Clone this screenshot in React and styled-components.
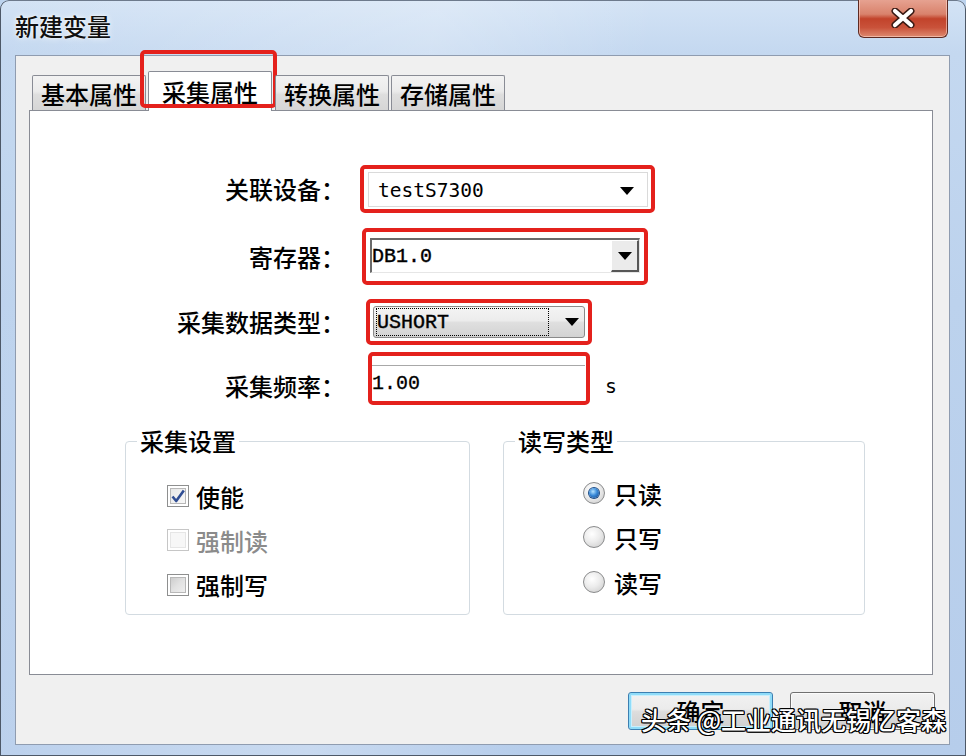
import React from 'react';
import styled, { createGlobalStyle } from 'styled-components';

const CJK = `"Noto Sans CJK SC", "Noto Sans", sans-serif`;
const MONO = `"Liberation Mono", "DejaVu Sans Mono", monospace`;

const GlobalStyle = createGlobalStyle`
  html, body { margin: 0; padding: 0; background: #bcd3ee; }
  body { font-family: ${CJK}; font-weight: 500; color: #000; }
  #root { width: 966px; height: 756px; overflow: hidden; }
`;

const Window = styled.div`
  position: relative;
  width: 966px;
  height: 756px;
  box-sizing: border-box;
  display: flex;
  flex-direction: column;
  overflow: hidden;
  border-radius: 9px 9px 0 0;
  background:
    linear-gradient(100deg, rgba(255,255,255,0.0) 0%, rgba(255,255,255,0.25) 40%, rgba(255,255,255,0.0) 60%),
    linear-gradient(180deg, #d3e3f5 0%, #c4d8f0 7%, #bcd2ed 40%, #b6cdeb 100%);
  box-shadow: inset 1px 0 0 #4d5867, inset 0 1px 0 #6d7a8c, inset -1px 0 0 #4d5867, inset 0 -1px 0 #4d5867;
`;

const TitleBar = styled.div`
  height: 55px;
  flex: none;
  display: flex;
  align-items: flex-start;
`;

const Title = styled.div`
  margin: 10px 0 0 15px;
  font-size: 24px;
  line-height: 32px;
  color: #101010;
  text-shadow: 0 0 6px rgba(255,255,255,0.9), 0 0 2px rgba(255,255,255,0.9);
`;

const CloseButton = styled.div`
  margin-left: auto;
  margin-right: 18px;
  margin-top: -1px;
  width: 90px;
  height: 39px;
  box-sizing: border-box;
  border: 1px solid #5e2a22;
  border-top: none;
  border-radius: 0 0 6px 6px;
  background: linear-gradient(180deg, #e7a493 0%, #d9826c 40%, #c2432b 52%, #c9523a 75%, #de8a70 100%);
  box-shadow: inset 0 0 0 1px rgba(255,220,210,0.55);
  display: flex;
  align-items: center;
  justify-content: center;
`;

const Client = styled.div`
  flex: 1;
  margin: 0 16px 11px 15px;
  box-sizing: border-box;
  border: 1px solid #8f9cb0;
  background: #f0f0f0;
  padding: 15px 16px 0 13px;
  display: flex;
  flex-direction: column;
`;

const TabStrip = styled.div`
  display: flex;
  align-items: flex-end;
  height: 40px;
  padding-left: 3px;
  margin-bottom: -1px;
  position: relative;
  z-index: 1;
`;

const Tab = styled.div`
  position: relative;
  box-sizing: border-box;
  margin-left: ${p => (p.$first ? 0 : p.$gap || 2)}px;
  padding: 0 ${p => (p.$active ? 13 : 8)}px;
  height: ${p => (p.$active ? 40 : 35)}px;
  margin-bottom: ${p => (p.$active ? 0 : 1)}px;
  border: 1px solid #898c95;
  border-bottom: none;
  border-radius: 2px 2px 0 0;
  background: ${p => (p.$active ? '#ffffff' : 'linear-gradient(180deg, #f3f3f3 0%, #ebebeb 45%, #dedede 55%, #d6d6d6 100%)')};
  font-size: 24px;
  line-height: 33px;
  display: flex;
  align-items: center;
`;

const TabMark = styled.span`
  position: absolute;
  left: -9px;
  right: -6px;
  top: -22px;
  bottom: 3px;
  border: 4px solid #e4211c;
  border-radius: 5px;
  pointer-events: none;
`;

const Panel = styled.div`
  height: 565px;
  box-sizing: border-box;
  border: 1px solid #898c95;
  background: #ffffff;
  padding-top: 54px;
  display: flex;
  flex-direction: column;
`;

const FormRow = styled.div`
  display: flex;
  align-items: center;
  margin-top: ${p => p.$gap || 0}px;
`;

const FieldLabel = styled.div`
  width: 315px;
  flex: none;
  text-align: right;
  font-size: 24px;
  line-height: 32px;
  padding-top: ${p => p.$dy || 0}px;
`;

const Highlight = styled.div`
  box-sizing: border-box;
  width: ${p => p.$w}px;
  margin-left: ${p => p.$ml}px;
  padding: ${p => p.$pad};
  border: 4px solid #e4211c;
  border-radius: 5px;
  background: #fff;
`;

const Arrow = styled.span`
  width: 0;
  height: 0;
  flex: none;
  border-left: 7px solid transparent;
  border-right: 7px solid transparent;
  border-top: 8px solid #000;
`;

const FlatCombo = styled.div`
  width: 280px;
  height: 35px;
  box-sizing: border-box;
  border: 1px solid #dadada;
  background: #fff;
  display: flex;
  align-items: center;
  justify-content: space-between;
  padding: 2px 13px 0 9px;
  font-family: "DejaVu Sans Mono", monospace;
  font-weight: 400;
  font-size: 19.5px;
`;

const ClassicCombo = styled.div`
  width: 270px;
  height: 35px;
  box-sizing: border-box;
  border-top: 2px solid #6a6a6a;
  border-left: 2px solid #6a6a6a;
  border-right: 1px solid #e6e6e6;
  border-bottom: 1px solid #e6e6e6;
  background: #fff;
  display: flex;
  align-items: stretch;
`;

const ComboText = styled.span`
  flex: 1;
  display: flex;
  align-items: center;
  font-family: ${MONO};
  font-weight: 400;
  font-size: 20px;
  -webkit-text-stroke: 0.4px #000;
`;

const ClassicDrop = styled.span`
  width: 28px;
  box-sizing: border-box;
  background: #ebebeb;
  border-top: 1px solid #fff;
  border-left: 1px solid #fff;
  border-right: 2px solid #575757;
  border-bottom: 2px solid #575757;
  display: flex;
  align-items: center;
  justify-content: center;
`;

const ButtonCombo = styled.div`
  width: 212px;
  height: 32px;
  box-sizing: border-box;
  border: 1px solid #8a8a8a;
  border-radius: 3px;
  background: linear-gradient(180deg, #f4f4f4 0%, #ececec 45%, #dfdfdf 52%, #d3d3d3 100%);
  display: flex;
  align-items: center;
  padding: 1px 5px 1px 2px;
`;

const FocusText = styled.span`
  width: 173px;
  height: 28px;
  box-sizing: border-box;
  border: 1px dotted #000;
  display: flex;
  align-items: center;
  font-family: ${MONO};
  font-weight: 400;
  font-size: 20px;
  -webkit-text-stroke: 0.4px #000;
  margin-right: auto;
`;

const TextBox = styled.div`
  width: 213px;
  height: 33px;
  box-sizing: border-box;
  border-top: 1px solid #a8a8a8;
  background: #fff;
  display: flex;
  align-items: center;
  padding-top: 3px;
  font-family: ${MONO};
  font-weight: 400;
  font-size: 20px;
  -webkit-text-stroke: 0.3px #000;
`;

const Unit = styled.span`
  margin-left: 16px;
  padding-top: 14px;
  font-family: "DejaVu Sans", sans-serif;
  font-weight: 400;
  font-size: 19px;
`;

const Groups = styled.div`
  display: flex;
  gap: 33px;
  margin: 22px 0 0 95px;
`;

const Group = styled.fieldset`
  margin: 0;
  width: ${p => p.$w}px;
  height: 188px;
  box-sizing: border-box;
  border: 1px solid #d3dbe1;
  border-radius: 4px;
  padding: 0;
  min-width: 0;
`;

const Legend = styled.legend`
  margin-left: 11px;
  padding: 0 3px;
  font-size: 24px;
  line-height: 28px;
`;

const OptionList = styled.div`
  display: flex;
  flex-direction: column;
  padding: ${p => p.$top}px 0 0 ${p => p.$left}px;
`;

const OptionRow = styled.div`
  display: flex;
  align-items: center;
  height: ${p => p.$h || 44}px;
  gap: ${p => p.$gap}px;
  font-size: 24px;
  color: ${p => (p.$disabled ? '#8b8b8b' : '#000')};
`;

const CheckBox = styled.span`
  width: 22px;
  height: 22px;
  flex: none;
  box-sizing: border-box;
  border: 1px solid ${p => (p.$disabled ? '#c6c6c6' : '#8e8f8f')};
  background: ${p =>
    p.$disabled
      ? '#f7f7f7'
      : p.$checked
      ? 'linear-gradient(135deg, #e4e4e4, #fbfbfb)'
      : 'linear-gradient(135deg, #c4c4c4 0%, #e2e2e2 50%, #f4f4f4 100%)'};
  box-shadow: inset 0 0 0 2px #fff, inset 0 0 0 3px ${p => (p.$disabled ? '#e6e6e6' : '#b8b8b8')};
  display: flex;
  align-items: center;
  justify-content: center;
`;

const Radio = styled.span`
  width: 22px;
  height: 22px;
  flex: none;
  box-sizing: border-box;
  border-radius: 50%;
  border: 1px solid #8a8b8c;
  background: radial-gradient(circle at 40% 35%, #ffffff 0%, #ececec 45%, #c8c8c8 100%);
  display: flex;
  align-items: center;
  justify-content: center;
  &::after {
    content: '';
    display: ${p => (p.$on ? 'block' : 'none')};
    width: 10px;
    height: 10px;
    border-radius: 50%;
    background: radial-gradient(circle at 40% 35%, #b4e2ff 0%, #3a8ad8 45%, #0e3f86 100%);
    box-shadow: 0 0 0 1px #1d4c86;
  }
`;

const ButtonRow = styled.div`
  display: flex;
  justify-content: flex-end;
  gap: 17px;
  padding-top: 17px;
  margin-right: -2px;
`;

const DialogButton = styled.button`
  width: 145px;
  height: 38px;
  box-sizing: border-box;
  border-radius: 3px;
  border: 1px solid ${p => (p.$primary ? '#3c7fb1' : '#707070')};
  background: linear-gradient(180deg, #f2f2f2 0%, #ebebeb 45%, #dddddd 52%, #cfcfcf 100%);
  box-shadow: ${p => (p.$primary ? 'inset 0 0 0 2px #8fdcf9, inset 0 0 0 3px #c9effc' : 'inset 0 0 0 1px #fbfbfb')};
  font-family: ${CJK};
  font-weight: 500;
  font-size: 24px;
  line-height: 1;
  color: #000;
  padding: 0;
`;

const Watermark = styled.div`
  position: absolute;
  right: 20px;
  bottom: 22px;
  font-size: 25px;
  line-height: 30px;
  color: #fff;
  white-space: pre;
  text-shadow:
    1px 0 0 #000, -1px 0 0 #000, 0 1px 0 #000, 0 -1px 0 #000,
    1px 1px 0 #000, -1px -1px 0 #000, 1px -1px 0 #000, -1px 1px 0 #000;
`;

const CloseIcon = () => (
  <svg width="24" height="20" viewBox="0 0 24 20">
    <path d="M4 3 L20 17 M20 3 L4 17" stroke="#3a1a14" strokeWidth="7" strokeLinecap="round" />
    <path d="M4 3 L20 17 M20 3 L4 17" stroke="#ffffff" strokeWidth="4.2" strokeLinecap="round" />
  </svg>
);

const CheckMark = () => (
  <svg width="16" height="16" viewBox="0 0 16 16">
    <path d="M2.5 8.5 L6.2 13 L13.8 2.5" fill="none" stroke="#2f4d93" strokeWidth="2.6" strokeLinejoin="round" />
  </svg>
);

export default function App() {
  return (
    <>
      <GlobalStyle />
      <Window>
        <TitleBar>
          <Title>新建变量</Title>
          <CloseButton>
            <CloseIcon />
          </CloseButton>
        </TitleBar>
        <Client>
          <TabStrip>
            <Tab $first>基本属性</Tab>
            <Tab $active>
              采集属性
              <TabMark />
            </Tab>
            <Tab $gap={3}>转换属性</Tab>
            <Tab>存储属性</Tab>
          </TabStrip>
          <Panel>
            <FormRow>
              <FieldLabel>关联设备：</FieldLabel>
              <Highlight $w={295} $ml={15} $pad="3px 3px 2px 4px">
                <FlatCombo>
                  <span>testS7300</span>
                  <Arrow />
                </FlatCombo>
              </Highlight>
            </FormRow>
            <FormRow $gap={15}>
              <FieldLabel>寄存器：</FieldLabel>
              <Highlight $w={286} $ml={17} $pad="6px 4px 8px 4px">
                <ClassicCombo>
                  <ComboText>DB1.0</ComboText>
                  <ClassicDrop>
                    <Arrow />
                  </ClassicDrop>
                </ClassicCombo>
              </Highlight>
            </FormRow>
            <FormRow $gap={14}>
              <FieldLabel>采集数据类型：</FieldLabel>
              <Highlight $w={226} $ml={21} $pad="3px">
                <ButtonCombo>
                  <FocusText>USHORT</FocusText>
                  <Arrow />
                </ButtonCombo>
              </Highlight>
            </FormRow>
            <FormRow $gap={7}>
              <FieldLabel $dy={15}>采集频率：</FieldLabel>
              <Highlight $w={222} $ml={23} $pad="9px 1px 3px 0">
                <TextBox>1.00</TextBox>
              </Highlight>
              <Unit>s</Unit>
            </FormRow>
            <Groups>
              <Group $w={345}>
                <Legend>采集设置</Legend>
                <OptionList $top={19} $left={41}>
                  <OptionRow $gap={7}>
                    <CheckBox $checked>
                      <CheckMark />
                    </CheckBox>
                    使能
                  </OptionRow>
                  <OptionRow $gap={7} $disabled>
                    <CheckBox $disabled />
                    强制读
                  </OptionRow>
                  <OptionRow $gap={7} $h={45}>
                    <CheckBox />
                    强制写
                  </OptionRow>
                </OptionList>
              </Group>
              <Group $w={362}>
                <Legend>读写类型</Legend>
                <OptionList $top={16} $left={79}>
                  <OptionRow $gap={9}>
                    <Radio $on />
                    只读
                  </OptionRow>
                  <OptionRow $gap={9}>
                    <Radio />
                    只写
                  </OptionRow>
                  <OptionRow $gap={9} $h={46}>
                    <Radio />
                    读写
                  </OptionRow>
                </OptionList>
              </Group>
            </Groups>
          </Panel>
          <ButtonRow>
            <DialogButton $primary>确定</DialogButton>
            <DialogButton>取消</DialogButton>
          </ButtonRow>
        </Client>
        <Watermark>头条 @工业通讯无锡亿客森</Watermark>
      </Window>
    </>
  );
}
